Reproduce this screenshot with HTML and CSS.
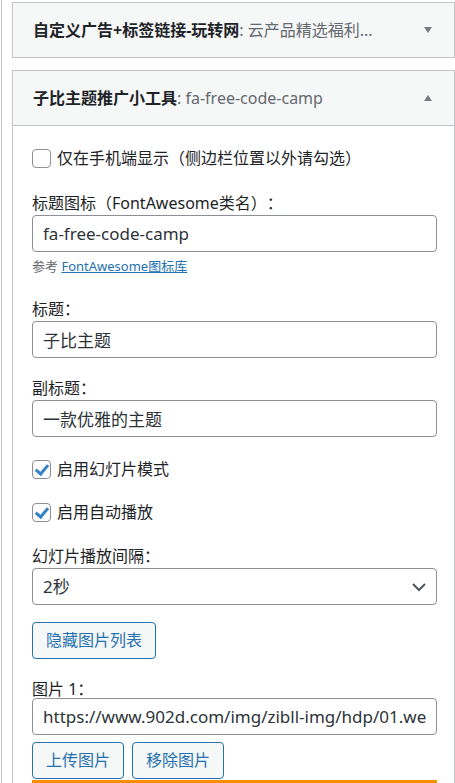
FILE: index.html
```html
<!DOCTYPE html>
<html lang="zh-CN">
<head>
<meta charset="utf-8">
<title>小工具</title>
<link rel="stylesheet" href="styles.css">
</head>
<body>
<div class="sidebar">
  <div class="widget">
    <div class="widget-top">
      <h3 class="widget-title">自定义广告+标签链接-玩转网<span class="in-title">: 云产品精选福利...</span></h3>
      <span class="toggle down"></span>
    </div>
  </div>

  <div class="widget open">
    <div class="widget-top">
      <h3 class="widget-title">子比主题推广小工具<span class="in-title">: fa-free-code-camp</span></h3>
      <span class="toggle up"></span>
    </div>
    <div class="widget-inside">
      <label class="check"><input type="checkbox" class="cb">仅在手机端显示（侧边栏位置以外请勾选）</label>

      <label class="lbl gap-24">标题图标（FontAwesome类名）：</label>
      <input class="text" type="text" value="fa-free-code-camp">
      <p class="desc">参考 <a href="#">FontAwesome图标库</a></p>

      <label class="lbl gap-23">标题：</label>
      <input class="text" type="text" value="子比主题">

      <label class="lbl gap-19">副标题：</label>
      <input class="text" type="text" value="一款优雅的主题">

      <label class="check gap-23"><input type="checkbox" class="cb" checked>启用幻灯片模式</label>
      <label class="check gap-24"><input type="checkbox" class="cb" checked>启用自动播放</label>

      <label class="lbl gap-23">幻灯片播放间隔：</label>
      <div class="select-wrap">
        <select class="select"><option>2秒</option></select>
        <svg class="chev" width="16" height="10" viewBox="0 0 16 10"><path d="M2 2 L8 8 L14 2" fill="none" stroke="#50575e" stroke-width="2"/></svg>
      </div>

      <div class="gap-17"><button class="btn" type="button">隐藏图片列表</button></div>

      <label class="lbl lbl-tight">图片 1：</label>
      <input class="text" type="text" value="https://www.902d.com/img/zibll-img/hdp/01.webp">
      <div class="btn-row">
        <button class="btn" type="button">上传图片</button>
        <button class="btn" type="button">移除图片</button>
      </div>
      <div class="bar"></div>
    </div>
  </div>
</div>
</body>
</html>
```

FILE: styles.css
```css
html, body {
  margin: 0;
  padding: 0;
  background: #fff;
  height: 100%;
  overflow: hidden;
}

body {
  font-family: "Noto Sans", "Noto Sans CJK SC", sans-serif;
  font-size: 16px;
  color: #1d2327;
  text-spacing-trim: space-all;
}

.sidebar {
  margin-left: 1px;
  border-left: 1px solid #c3c4c7;
  padding: 2px 0 0 10px;
  min-height: 100%;
  box-sizing: border-box;
}

.widget {
  border: 1px solid #c3c4c7;
  background: #fff;
  margin-bottom: 12px;
}

.widget-top {
  height: 54px;
  background: #f6f7f7;
  display: flex;
  align-items: center;
  padding-left: 20px;
}

.widget.open .widget-top {
  border-bottom: 1px solid #c3c4c7;
}

.widget-title {
  flex: 1;
  margin: 0;
  font-size: 16px;
  font-weight: 700;
  line-height: 22px;
  color: #1d2327;
  white-space: nowrap;
  overflow: hidden;
}

.in-title {
  font-weight: 400;
  color: #646970;
}

.toggle {
  width: 0;
  height: 0;
  margin-right: 22px;
  border-left: 4px solid transparent;
  border-right: 4px solid transparent;
}

.toggle.down {
  border-top: 6px solid #787c82;
}

.toggle.up {
  border-bottom: 6px solid #787c82;
}

.widget-inside {
  padding: 23px 17px 0 19px;
  display: flex;
  flex-direction: column;
  align-items: stretch;
}

.check {
  display: flex;
  align-items: center;
  gap: 6px;
  height: 19px;
  line-height: 19px;
  color: #1d2327;
  align-self: flex-start;
}

.cb {
  appearance: none;
  -webkit-appearance: none;
  margin: 0;
  width: 19px;
  height: 19px;
  border: 1px solid #8c8f94;
  border-radius: 4px;
  background: #fff;
  box-sizing: border-box;
  position: relative;
  flex: none;
}

.cb:checked::before {
  content: "";
  position: absolute;
  left: 5px;
  top: 1px;
  width: 5px;
  height: 10px;
  border-right: 3px solid #3582c4;
  border-bottom: 3px solid #3582c4;
  transform: rotate(40deg);
}

.lbl {
  display: block;
  line-height: 22px;
  margin-bottom: 1px;
  color: #1d2327;
}

.lbl-tight {
  margin-top: 22px;
  line-height: 17px;
  margin-bottom: 0;
}

.gap-17 { margin-top: 17px; }
.gap-19 { margin-top: 19px; }
.gap-23 { margin-top: 23px; }
.gap-24 { margin-top: 24px; }

.text,
.select {
  display: block;
  box-sizing: border-box;
  width: 100%;
  height: 37px;
  margin: 0;
  padding: 0 10px;
  border: 1px solid #8c8f94;
  border-radius: 4px;
  background: #fff;
  font-family: inherit;
  font-size: 17px;
  color: #2c3338;
  outline: none;
}

.desc {
  margin: 5px 0 0;
  font-size: 13px;
  line-height: 18px;
  color: #646970;
}

.desc a {
  color: #2271b1;
  text-decoration: underline;
}

.select-wrap {
  position: relative;
}

.select {
  appearance: none;
  -webkit-appearance: none;
  padding-right: 32px;
}

.chev {
  position: absolute;
  right: 10px;
  top: 14px;
  pointer-events: none;
}

.btn {
  height: 37px;
  padding: 0 13px;
  border: 1px solid #2271b1;
  border-radius: 4px;
  background: #f6f7f7;
  color: #2271b1;
  font-family: inherit;
  font-size: 16px;
  line-height: 35px;
  cursor: pointer;
  text-spacing-trim: space-all;
}

.btn-row {
  display: flex;
  gap: 8px;
  margin-top: 7px;
}

.bar {
  margin-top: 1px;
  height: 6px;
  background: #fb8c00;
}
```
